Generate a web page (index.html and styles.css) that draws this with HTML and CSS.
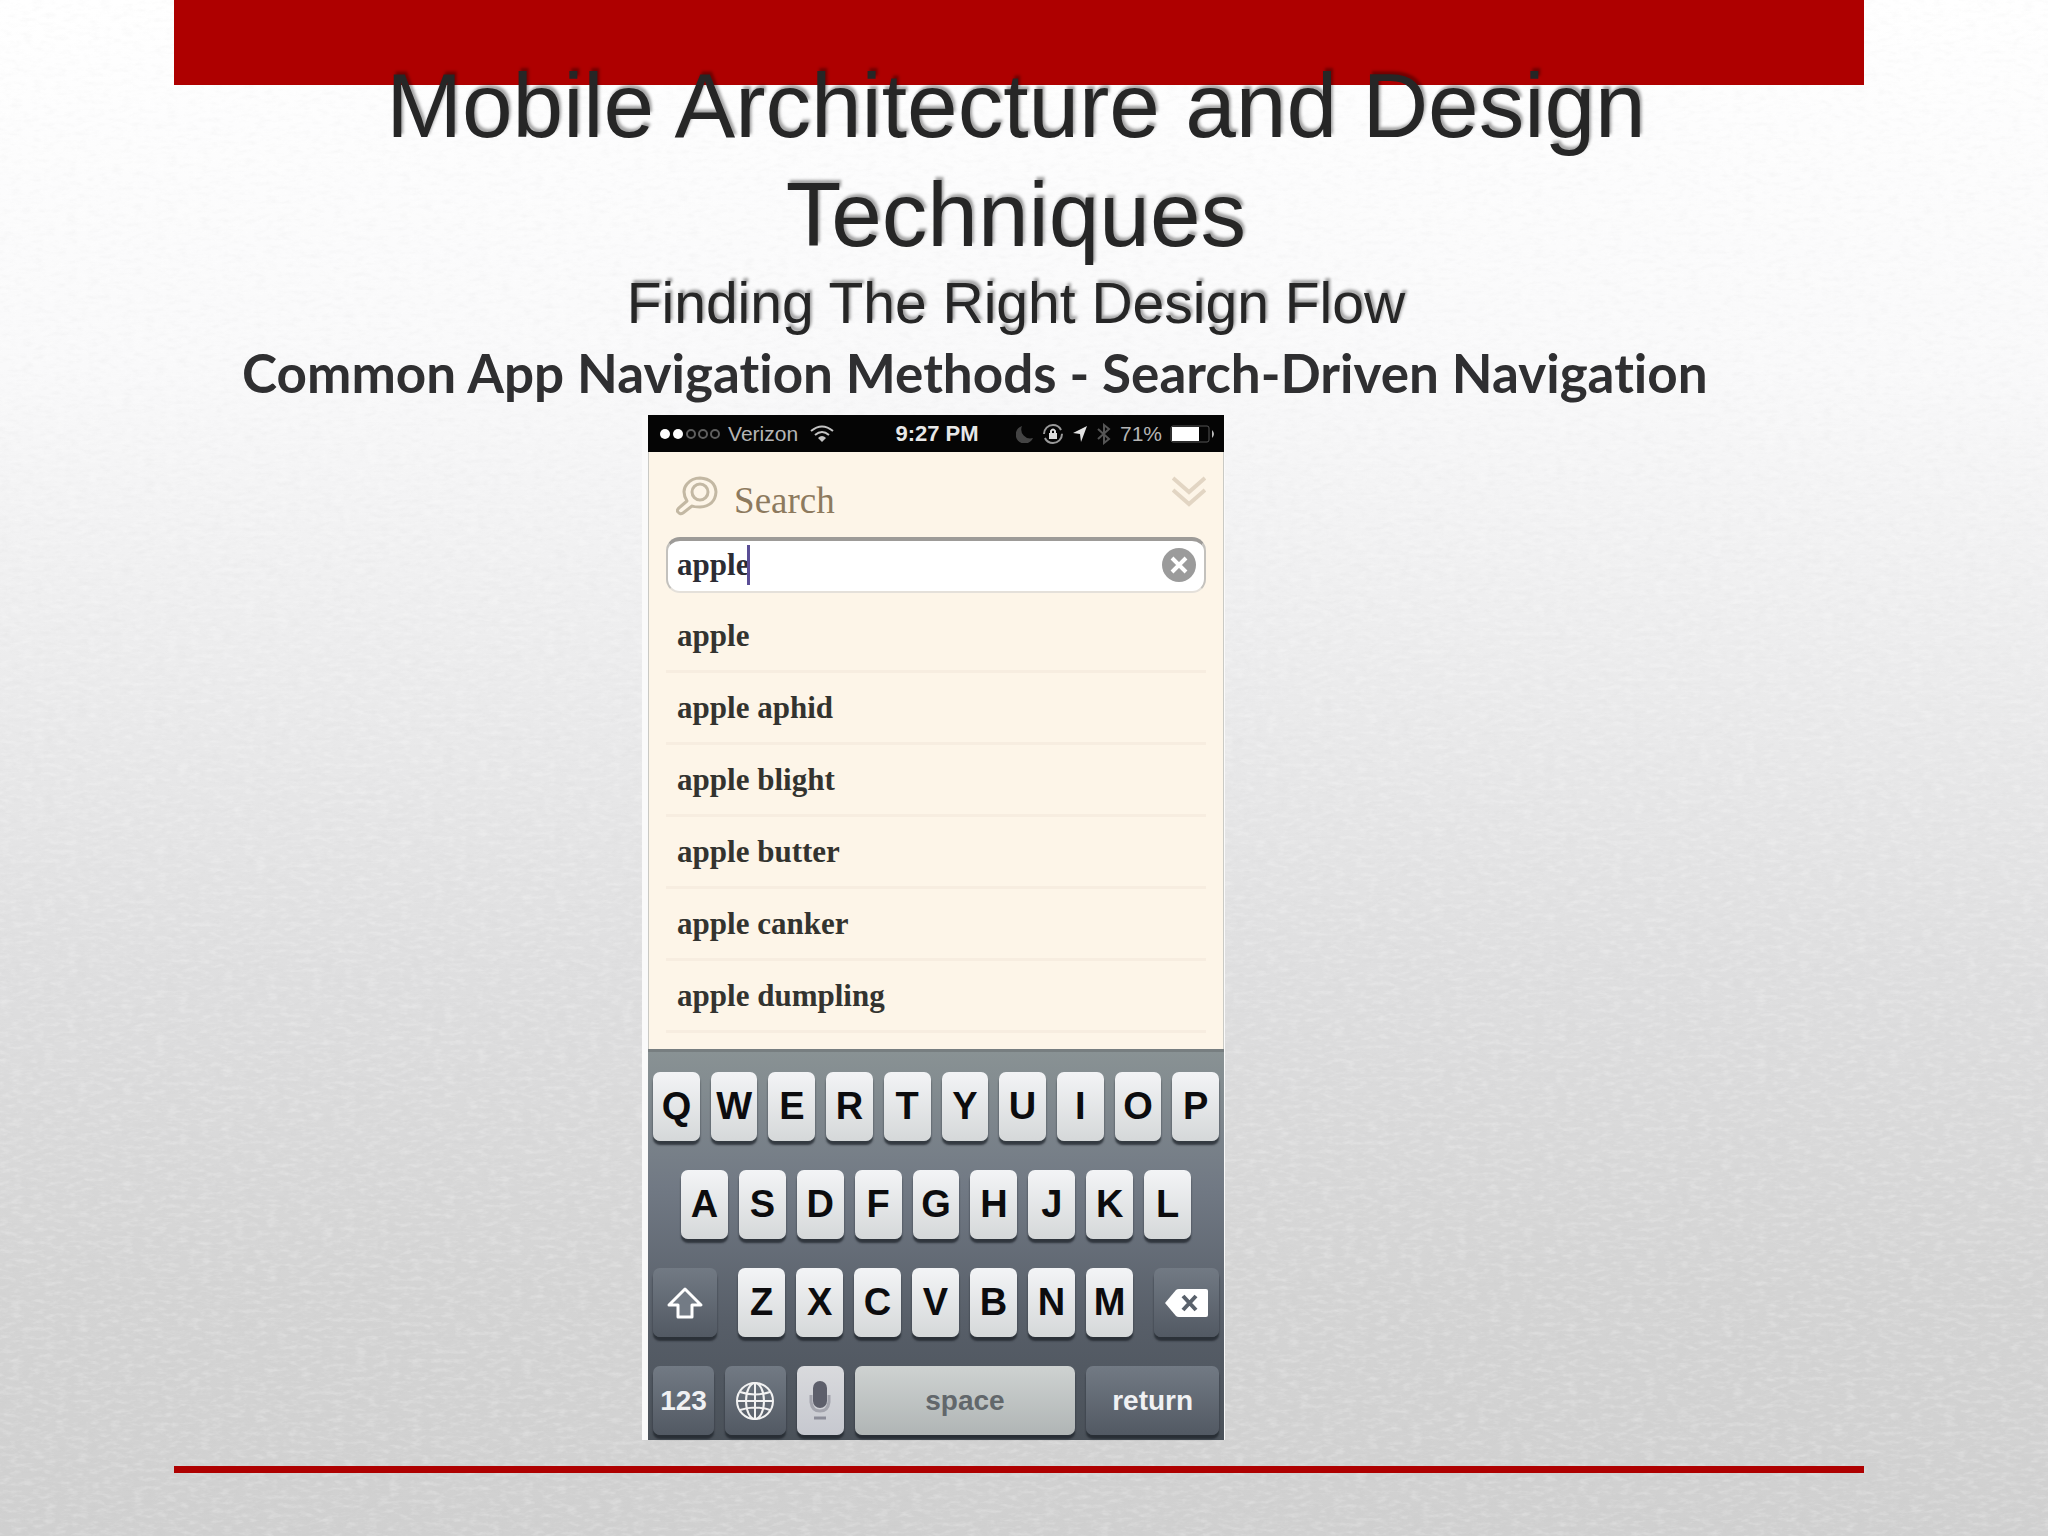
FILE: index.html
```html
<!DOCTYPE html>
<html lang="en">
<head>
  <meta charset="UTF-8" />
  <title>Mobile Architecture and Design Techniques</title>
  <meta name="viewport" content="width=device-width, initial-scale=1.0" />
  <link rel="stylesheet" href="styles.css">
</head>
<body>
  <!-- Paper grain behind the slide -->
  <svg class="paper" aria-hidden="true">
    <filter id="grain" x="0" y="0" width="100%" height="100%">
      <feTurbulence type="fractalNoise" baseFrequency="0.09 0.22" numOctaves="3" seed="4" />
      <feColorMatrix values="0 0 0 0 0.5  0 0 0 0 0.5  0 0 0 0 0.5  1.6 0 0 0 -0.7" />
    </filter>
    <filter id="grainLight" x="0" y="0" width="100%" height="100%">
      <feTurbulence type="fractalNoise" baseFrequency="0.09 0.22" numOctaves="3" seed="11" />
      <feColorMatrix values="0 0 0 0 1  0 0 0 0 1  0 0 0 0 1  2.4 0 0 0 -1.1" />
    </filter>
    <rect width="100%" height="100%" filter="url(#grain)" opacity="0.35" />
    <rect width="100%" height="100%" filter="url(#grainLight)" opacity="0.8" />
  </svg>

  <main class="slide">
    <div class="top-bar"></div>
    <header>
      <h1>Mobile Architecture and Design Techniques</h1>
      <p class="subtitle">Finding The Right Design Flow</p>
    </header>
    <h2>Common App Navigation Methods - Search-Driven Navigation</h2>

    <section class="phone" aria-label="Search screen">
      <div class="status-bar">
        <div class="status-left">
          <svg width="64" height="14" viewBox="0 0 64 14">
            <g fill="#fff"><circle cx="7" cy="7" r="5" /><circle cx="20" cy="7" r="5" /></g>
            <g fill="none" stroke="#5e5e5e" stroke-width="2"><circle cx="33" cy="7" r="4" /><circle cx="45" cy="7" r="4" /><circle cx="57" cy="7" r="4" /></g>
          </svg>
          <span>Verizon</span>
          <svg class="wifi" width="24" height="18" viewBox="0 0 24 18">
            <g fill="none" stroke="#c4c4c4" stroke-width="2"><path d="M1 6Q12 -3 23 6" /><path d="M5 10Q12 4 19 10" /></g>
            <path d="M8 13Q12 9 16 13L12 17Z" fill="#c4c4c4" />
          </svg>
        </div>
        <div class="time">9:27 PM</div>
        <div class="status-right">
          <svg width="18" height="18" viewBox="0 0 18 18"><path d="M6 1A9 9 0 0 0 17 13A9 9 0 1 1 6 1Z" fill="#444" /></svg>
          <svg width="22" height="22" viewBox="0 0 22 22">
            <circle cx="11" cy="11" r="9" fill="none" stroke="#999" stroke-width="2" stroke-dasharray="24 4" />
            <path d="M9 10V8Q11 5 13 8V10" fill="none" stroke="#ddd" stroke-width="2" />
            <rect x="7" y="10" width="8" height="6" fill="#ddd" />
          </svg>
          <svg width="16" height="18" viewBox="0 0 16 18"><path d="M15 1L9 17L8 9L1 8Z" fill="#e4e4e4" /></svg>
          <svg width="16" height="22" viewBox="0 0 16 22"><path d="M2 6L13 16L8 20V2L13 6L2 16" fill="none" stroke="#555" stroke-width="2" /></svg>
          <span>71%</span>
          <svg width="46" height="18" viewBox="0 0 46 18">
            <rect x="1" y="1" width="38" height="16" rx="2" fill="none" stroke="#555" stroke-width="1" />
            <rect x="2" y="2" width="27" height="14" fill="#fff" />
            <path d="M42 5Q46 9 42 13Z" fill="#bbb" />
          </svg>
        </div>
      </div>

      <div class="search-panel">
        <div class="search-head">
          <svg width="42" height="40" viewBox="0 0 42 40">
            <g fill="none" stroke="#c3b8a3" stroke-width="3">
              <circle cx="24" cy="16" r="8" />
              <path d="M11 25Q5 15 11 8Q16 2 24 2Q39 3 40 16Q39 30 24 31Q18 31 16 30L7 37Q4 39 2 36Q0 34 4 31Z" stroke-linejoin="round" />
            </g>
          </svg>
          <label for="query">Search</label>
          <button class="collapse" aria-label="Collapse">
            <svg width="34" height="32" viewBox="0 0 34 32"><path d="M1 2L17 16L33 2M1 14L17 28L33 14" fill="none" stroke="#e2d5c3" stroke-width="4" /></svg>
          </button>
        </div>

        <div class="search-box">
          <input id="query" type="text" value="apple">
          <span class="caret"></span>
          <button class="clear" aria-label="Clear">
            <svg width="34" height="34" viewBox="0 0 34 34"><circle cx="17" cy="17" r="17" fill="#9b9b9b" /><path d="M10 10L24 24M24 10L10 24" stroke="#fff" stroke-width="4" /></svg>
          </button>
        </div>

        <ul class="results">
          <li>apple</li>
          <li>apple aphid</li>
          <li>apple blight</li>
          <li>apple butter</li>
          <li>apple canker</li>
          <li>apple dumpling</li>
        </ul>
      </div>

      <div class="keyboard">
        <div class="key-row">
          <button>Q</button><button>W</button><button>E</button><button>R</button><button>T</button><button>Y</button><button>U</button><button>I</button><button>O</button><button>P</button>
        </div>
        <div class="key-row key-row-inset">
          <button>A</button><button>S</button><button>D</button><button>F</button><button>G</button><button>H</button><button>J</button><button>K</button><button>L</button>
        </div>
        <div class="key-row key-row-shift">
          <button class="dark" aria-label="Shift">
            <svg width="38" height="34" viewBox="0 0 38 34"><path d="M19 3L35 19H26V31H12V19H3Z" fill="#737b85" stroke="#fff" stroke-width="3" stroke-linejoin="round" /></svg>
          </button>
          <div class="letters">
            <button>Z</button><button>X</button><button>C</button><button>V</button><button>B</button><button>N</button><button>M</button>
          </div>
          <button class="dark" aria-label="Delete">
            <svg width="44" height="30" viewBox="0 0 44 30"><path d="M0 15L11 2Q12 1 14 1H41Q43 1 43 3V27Q43 29 41 29H14Q12 29 11 28Z" fill="#fff" /><path d="M18 8L31 22M31 8L18 22" stroke="#59616b" stroke-width="4" /></svg>
          </button>
        </div>
        <div class="key-row key-row-bottom">
          <button class="dark">123</button>
          <button class="dark" aria-label="Next keyboard">
            <svg width="40" height="40" viewBox="0 0 40 40" fill="none" stroke="#f2f2f2" stroke-width="2"><circle cx="20" cy="20" r="18" /><ellipse cx="20" cy="20" rx="9" ry="18" /><path d="M20 2V38M2 20H38M5 11Q20 16 35 11M5 29Q20 24 35 29" /></svg>
          </button>
          <button class="mic" aria-label="Dictate">
            <svg width="24" height="42" viewBox="0 0 24 42"><rect x="5" y="1" width="14" height="27" rx="7" fill="#5d5f6b" /><path d="M3 15V22Q4 31 12 31Q20 31 21 22V15" fill="none" stroke="#a3a4ad" stroke-width="3" /><path d="M6 38H18" stroke="#8b8c98" stroke-width="3" /></svg>
          </button>
          <button class="space">space</button>
          <button class="dark">return</button>
        </div>
      </div>
    </section>

    <hr>
  </main>
</body>
</html>
```

FILE: styles.css
```css
:root {
  --red: #ae0000;
  --ink: #262626;
  --cream: #fdf5e8;
  --sans: "Liberation Sans", Arial, sans-serif;
  --serif: "Liberation Serif", "Times New Roman", serif;
}
* {
  box-sizing: border-box;
}
body {
  margin: 0;
  min-height: 100vh;
  position: relative;
  font-family: var(--sans);
  color: var(--ink);
  background: linear-gradient(#ffffff 0%, #f9f9fa 24%, #eaeaeb 46%, #dededf 64%, #d4d4d4 84%, #d0d0d0 100%);
}
.paper {
  position: absolute;
  inset: 0;
  width: 100%;
  height: 100%;
  opacity: 0.3;
}
.slide {
  position: relative;
  margin: 0 9% 0 8.5%;
}
.top-bar {
  height: 85px;
  background: var(--red);
}
header {
  margin-top: -34px;
  padding-right: 6px;
  text-align: center;
  text-shadow: 2px -3px 3px rgba(0, 0, 0, 0.35);
}
h1 {
  margin: 0 200px;
  font-size: 91px;
  font-weight: normal;
  line-height: 109px;
}
.subtitle {
  margin: 0;
  font-size: 57px;
  line-height: 68px;
}
h2 {
  margin: 6px 0 0 68px;
  font-family: Lato, sans-serif;
  font-size: 53px;
  line-height: 60px;
  font-variant-ligatures: none;
  color: #2f2f31;
}

/* Phone */
.phone {
  width: 34.5%;
  margin: 12px 0 0 27.7%;
  border-left: 6px solid #fafafa;
  border-right: 1px solid #fafafa;
}
.status-bar {
  display: grid;
  grid-template-columns: 1fr auto 1fr;
  align-items: center;
  height: 37px;
  padding: 0 8px 0 10px;
  background: #050505;
  color: #b5b5b5;
  font-size: 21px;
}
.status-bar svg {
  display: block;
}
.status-left,
.status-right {
  display: flex;
  align-items: center;
  gap: 8px;
}
.status-left {
  gap: 6px;
}
.wifi {
  margin-left: 6px;
}
.status-right {
  justify-content: flex-end;
}
.time {
  color: #e8e8e8;
  font-size: 22px;
  font-weight: bold;
}
.search-panel {
  padding: 24px 17px 16px;
  background: var(--cream);
  border: solid #c9c9c4;
  border-width: 0 1px;
  font-family: var(--serif);
}
.search-head {
  display: flex;
  height: 50px;
  padding-left: 10px;
}
.search-head label {
  margin: 4px auto 0 16px;
  color: #8d7a5e;
  font-size: 37px;
  line-height: 42px;
}
button {
  padding: 0;
  border: 0;
  background: none;
  font-family: var(--sans);
  cursor: pointer;
}
.search-head .collapse {
  align-self: flex-start;
}
.search-box {
  display: flex;
  align-items: center;
  height: 56px;
  margin-top: 11px;
  padding: 0 8px 2px 9px;
  background: #fff;
  border: 2px solid #c3c1bd;
  border-top: 4px solid #9d9b98;
  border-bottom-color: #e4e0da;
  border-radius: 14px;
}
.search-box input {
  field-sizing: content;
  min-width: 0;
  padding: 0;
  border: 0;
  outline: none;
  background: none;
  color: #2c2c34;
  font-family: var(--serif);
  font-size: 31px;
  font-weight: bold;
}
.caret {
  width: 3px;
  height: 40px;
  margin-left: -2px;
  background: #5a4e96;
}
.clear {
  margin-left: auto;
}
.clear svg,
.collapse svg {
  display: block;
}
.results {
  margin: 8px 0 0;
  padding: 0;
  list-style: none;
}
.results li {
  height: 72px;
  padding-left: 11px;
  border-bottom: 3px solid #f7ede0;
  color: #33332f;
  font-size: 31px;
  font-weight: bold;
  line-height: 69px;
}

/* Keyboard */
.keyboard {
  display: grid;
  gap: 29px;
  padding: 20px 5px 5px;
  border-top: 3px solid #777e80;
  background: linear-gradient(#899294, #717984 35%, #575e68 70%, #4a5159);
}
.key-row {
  display: grid;
  grid-template-columns: repeat(10, 1fr);
  gap: 11px;
}
.key-row-inset {
  grid-template-columns: repeat(9, 1fr);
  padding: 0 28px;
}
.key-row-shift {
  grid-template-columns: 64fr 395fr 65fr;
  gap: 21px;
}
.letters {
  display: grid;
  grid-template-columns: repeat(7, 1fr);
  gap: 11px;
}
.key-row-bottom {
  grid-template-columns: 61fr 61fr 47fr 221fr 133fr;
}
.keyboard button {
  display: flex;
  align-items: center;
  justify-content: center;
  height: 69px;
  border-radius: 7px;
  background: linear-gradient(#f3f4f6, #d5d8d9);
  box-shadow: 0 4px 2px rgba(30, 35, 42, 0.75);
  color: #0c0c0e;
  font-size: 38px;
  font-weight: bold;
}
.keyboard .dark {
  background: linear-gradient(#727a84, #525963);
  color: #f0f1f3;
}
.keyboard .key-row-bottom button {
  font-size: 28px;
}
.keyboard .mic {
  background: linear-gradient(#d9dadd, #c6c8cf);
}
.keyboard .space {
  background: linear-gradient(#ced2d1, #b0b5b5);
  color: #62676b;
}
hr {
  height: 7px;
  margin: 26px 0 0;
  border: 0;
  background: var(--red);
}
```
